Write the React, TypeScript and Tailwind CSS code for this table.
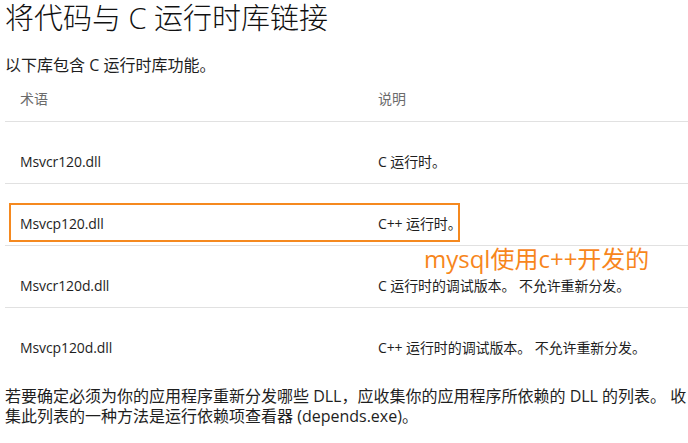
const rows = [
  { term: 'Msvcr120.dll', desc: 'C 运行时。' },
  { term: 'Msvcp120.dll', desc: 'C++ 运行时。' },
  { term: 'Msvcr120d.dll', desc: 'C 运行时的调试版本。 不允许重新分发。' },
  { term: 'Msvcp120d.dll', desc: 'C++ 运行时的调试版本。 不允许重新分发。' },
];

export default function App() {
  return (
    <div
      className="relative w-[688px] h-[443px] overflow-hidden bg-white pl-[5px] text-[#1e1e1e]"
      style={{ fontFamily: '"Open Sans", "Noto Sans CJK SC", sans-serif' }}
    >
      <h1 className="text-[29px] font-light leading-[36px] text-[#111]">将代码与 C 运行时库链接</h1>
      <p className="mt-[17px] text-[16px] leading-[24px]">以下库包含 C 运行时库功能。</p>

      <div className="mt-[4px] text-[14px] tracking-[-0.1px]">
        <div className="grid grid-cols-[373px_1fr] border-b border-[#e1e1e1] pt-[8px] pb-[12px] leading-[20px] text-[#6b6b6b]">
          <div className="pl-[15px]">术语</div>
          <div>说明</div>
        </div>
        {rows.map((r, i) => (
          <div
            key={r.term}
            className={
              'grid grid-cols-[373px_1fr] pt-[30px] leading-[20px] ' +
              (i < rows.length - 1 ? 'pb-[11px] border-b border-[#e1e1e1]' : 'pb-[12px]')
            }
          >
            <div className="pl-[15px]">{r.term}</div>
            <div>{r.desc}</div>
          </div>
        ))}
      </div>

      <p className="mt-[16px] text-[16px] leading-[20px]">
        若要确定必须为你的应用程序重新分发哪些 DLL，应收集你的应用程序所依赖的 DLL 的列表。 收
        <br />
        集此列表的一种方法是运行依赖项查看器 (depends.exe)。
      </p>

      <div className="absolute left-[9px] top-[203px] w-[451px] h-[39px] border-2 border-[#f5891f]" />
      <div className="absolute left-[424px] top-[244px] text-[24px] leading-[30px] text-[#f7861c]">
        mysql使用c++开发的
      </div>
    </div>
  );
}
